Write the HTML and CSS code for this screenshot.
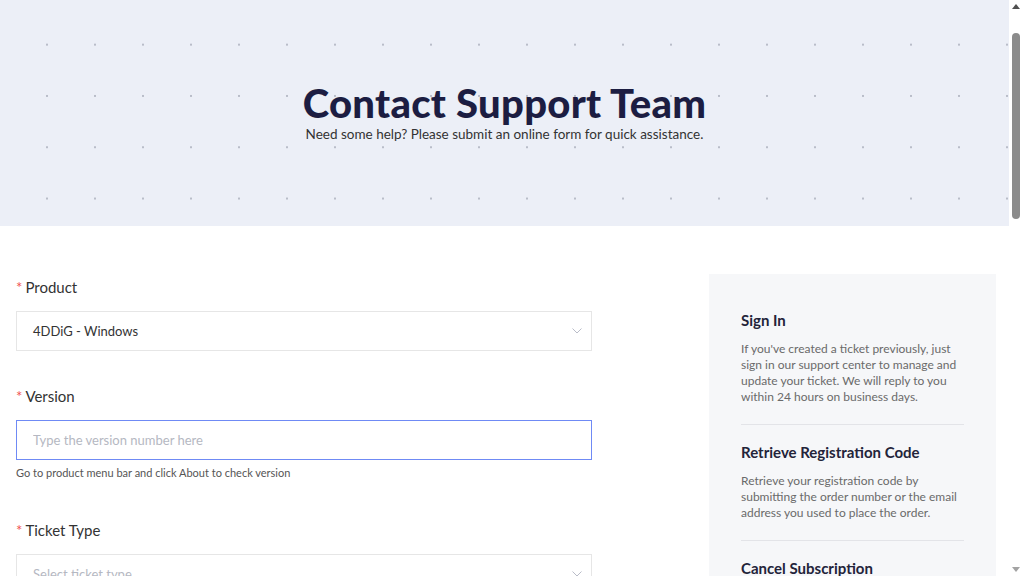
FILE: index.html
```html
<!DOCTYPE html>
<html lang="en">
<head>
<meta charset="UTF-8" />
<meta name="viewport" content="width=device-width, initial-scale=1" />
<title>Contact Support Team</title>
<link rel="stylesheet" href="styles.css">
</head>
<body>
<section class="hero">
    <h1>Contact Support Team</h1>
    <p>Need some help? Please submit an online form for quick assistance.</p>
</section>

<main class="container">
    <form class="ticket-form">
        <div class="form-group">
            <label><span class="req">*</span>Product</label>
            <div class="select">
                <span class="value">4DDiG - Windows</span>
                <svg class="chevron" width="10" height="6" viewBox="0 0 10 6"><path d="M0.5 0.5 L5 5 L9.5 0.5" fill="none" stroke="#b9bcc8" stroke-width="1"/></svg>
            </div>
        </div>
        <div class="form-group">
            <label for="version"><span class="req">*</span>Version</label>
            <input type="text" id="version" class="input focus" placeholder="Type the version number here" />
            <p class="hint">Go to product menu bar and click About to check version</p>
        </div>
        <div class="form-group">
            <label><span class="req">*</span>Ticket Type</label>
            <div class="select">
                <span class="value placeholder">Select ticket type</span>
                <svg class="chevron" width="10" height="6" viewBox="0 0 10 6"><path d="M0.5 0.5 L5 5 L9.5 0.5" fill="none" stroke="#b9bcc8" stroke-width="1"/></svg>
            </div>
        </div>
        <div class="form-group">
            <label for="email"><span class="req">*</span>Email</label>
            <input type="text" id="email" class="input" placeholder="Enter your email address" />
        </div>
        <div class="form-group">
            <label for="subject"><span class="req">*</span>Subject</label>
            <input type="text" id="subject" class="input" placeholder="Summarize your issue" />
        </div>
    </form>

    <aside class="sidebar">
        <div class="side-item">
            <h3>Sign In</h3>
            <p>If you've created a ticket previously, just sign in our support center to manage and update your ticket. We will reply to you within 24 hours on business days.</p>
        </div>
        <div class="side-item">
            <h3>Retrieve Registration Code</h3>
            <p>Retrieve your registration code by submitting the order number or the email address you used to place the order.</p>
        </div>
        <div class="side-item">
            <h3>Cancel Subscription</h3>
            <p>Cancel your subscription plan at any time by submitting the order number or the email address.</p>
        </div>
    </aside>
</main>

<!-- barra de rolagem desenhada (o navegador sem interface esconde a real) -->
<div class="scrollbar">
    <span class="arrow up"></span>
    <span class="thumb"></span>
    <span class="arrow down"></span>
</div>
</body>
</html>
```

FILE: styles.css
```css
body { margin: 0 15px 0 0; font-family: Lato, "Open Sans", sans-serif; color: #333; background: #fff; }

.hero { height: 226px; background-color: #eceff7; background-image: radial-gradient(circle, #b9bdc9 0.9px, transparent 1.3px); background-size: 48px 51.3px; background-position: 23px 19px; display: flex; flex-direction: column; align-items: center; justify-content: center; }
.hero h1 { margin: 0; font-size: 40px; font-weight: 900; color: #1c1d42; line-height: 44px; letter-spacing: 0.3px; }
.hero p { margin: 0 0 2px; font-size: 13.5px; color: #333; line-height: 18px; }

.container { width: 980px; margin: 0 0 0 16px; padding: 48px 0 80px; display: flex; justify-content: space-between; align-items: flex-start; }

.ticket-form { width: 576px; padding-top: 3px; }
.form-group { margin-bottom: 35px; }
.form-group label { display: block; font-size: 15px; color: #333; line-height: 20px; margin-bottom: 14px; }
.req { color: #f0504f; margin-right: 3px; }

.select { height: 40px; box-sizing: border-box; border: 1px solid #e6e6e6; display: flex; align-items: center; justify-content: space-between; padding: 0 9px 0 16px; font-size: 13px; color: #333; }
.select .placeholder { color: #b5b8c2; }
.input { display: block; width: 100%; height: 40px; box-sizing: border-box; border: 1px solid #e6e6e6; padding: 0 16px; font-family: inherit; font-size: 13px; color: #333; outline: none; }
.input::placeholder { color: #b5b8c2; }
.input.focus { border-color: #6f8af5; }
.hint { margin: 6px 0 0; padding-bottom: 5px; font-size: 11px; color: #555; line-height: 14px; }

.sidebar { width: 287px; box-sizing: border-box; background: #f6f7f9; padding: 36px 32px 24px; }
.side-item { border-bottom: 1px solid #e3e4e8; padding-bottom: 19px; margin-bottom: 17px; }
.side-item:last-child { border-bottom: none; }
.side-item h3 { margin: 0 0 11px; font-size: 15px; font-weight: 700; color: #23243a; line-height: 20px; }
.side-item p { margin: 0; font-size: 12px; color: #6a6a6a; line-height: 16px; }

.scrollbar { position: fixed; top: 0; right: 0; width: 15px; height: 100vh; background: #fff; }
.arrow { position: absolute; left: 3px; width: 0; height: 0; border-left: 4.5px solid transparent; border-right: 4.5px solid transparent; }
.arrow.up { top: 4px; border-bottom: 5px solid #505050; }
.arrow.down { bottom: 4px; border-top: 5px solid #a3a3a3; }
.thumb { position: absolute; top: 33px; left: 3px; width: 8px; height: 186px; border-radius: 4px; background: #8b8b8b; }
```
